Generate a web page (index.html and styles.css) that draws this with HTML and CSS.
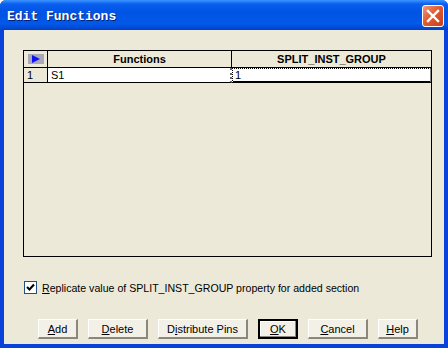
FILE: index.html
```html
<!DOCTYPE html>
<html lang="en">
<head>
    <meta charset="UTF-8">
    <title>Edit Functions</title>
    <link rel="stylesheet" href="styles.css">
</head>
<body>
    <div class="window">
        <div class="titlebar">
            <span class="title">Edit Functions</span>
            <div class="close">
                <svg width="14" height="14" viewBox="0 0 14 14">
                    <path d="M2 2 L12 12 M12 2 L2 12" stroke="#fff" stroke-width="2.4" stroke-linecap="square"/>
                </svg>
            </div>
        </div>

        <div class="client">
            <div class="grid">
                <div class="grid-row header">
                    <div class="cell sel"><span class="sel-icon"></span></div>
                    <div class="cell col-fn">Functions</div>
                    <div class="cell col-val">SPLIT_INST_GROUP</div>
                </div>
                <div class="grid-row">
                    <div class="cell sel num">1</div>
                    <div class="cell col-fn data">S1</div>
                    <div class="cell col-val data focus">1</div>
                </div>
            </div>

            <label class="check">
                <span class="box">
                    <svg width="9" height="9" viewBox="0 0 9 9">
                        <path d="M1 4 L3.5 6.5 L8 1.5" stroke="#000" stroke-width="2" fill="none"/>
                    </svg>
                </span>
                <span class="check-text"><u>R</u>eplicate value of SPLIT_INST_GROUP property for added section</span>
            </label>

            <div class="buttons">
                <div class="btn w-40"><u>A</u>dd</div>
                <div class="btn w-60"><u>D</u>elete</div>
                <div class="btn w-90">D<u>i</u>stribute Pins</div>
                <div class="btn w-40 default"><u>O</u>K</div>
                <div class="btn w-60"><u>C</u>ancel</div>
                <div class="btn w-40"><u>H</u>elp</div>
            </div>
        </div>
    </div>
</body>
</html>
```

FILE: styles.css
```css
* {
    margin: 0;
    padding: 0;
    box-sizing: border-box;
}

body {
    font-family: "Liberation Sans", Arial, sans-serif;
    font-size: 11px;
    color: #000;
    background: #fff;
}

.window {
    width: 448px;
    height: 348px;
    display: flex;
    flex-direction: column;
    background: #0842d9;
    border-radius: 6px 6px 0 0;
    overflow: hidden;
}

.titlebar {
    height: 30px;
    display: flex;
    align-items: center;
    justify-content: space-between;
    padding: 0 4px 0 7px;
    background: linear-gradient(#3d95ff 0px, #0a5fef 4px, #0054e3 12px, #0258e8 24px, #0041c8 30px);
}

.title {
    font-family: "Liberation Mono", "Courier New", monospace;
    font-weight: bold;
    font-size: 13px;
    color: #fff;
    padding-top: 2px;
    text-shadow: 1px 1px 0 #0a1e6e;
}

.close {
    width: 22px;
    height: 22px;
    margin-top: 2px;
    border: 1px solid #fff;
    border-radius: 3px;
    background: linear-gradient(135deg, #f09a7a, #e15a32 45%, #c6401c);
    display: flex;
    align-items: center;
    justify-content: center;
}

.client {
    flex: 1;
    margin: 0 4px 4px 4px;
    background: #ece9d8;
    padding: 20px 0 0 19px;
    display: flex;
    flex-direction: column;
}

.grid {
    width: 409px;
    height: 207px;
    border: 1px solid #000;
    background: #ece9d8;
}

.grid-row {
    display: flex;
    height: 15px;
}

.grid-row.header {
    height: 17px;
    border-bottom: 1px solid #000;
}

.cell {
    display: flex;
    align-items: center;
    white-space: nowrap;
}

.header .cell {
    justify-content: center;
    font-weight: bold;
    border-right: 1px solid #000;
}

.header .cell:last-child {
    border-right: none;
}

.sel {
    width: 24px;
}

.col-fn {
    width: 184px;
}

.col-val {
    width: 199px;
}

.sel-icon {
    width: 16px;
    height: 10px;
    background: #a8a8b8;
    position: relative;
}

.sel-icon::after {
    content: "";
    position: absolute;
    left: 4px;
    top: 1px;
    border-left: 8px solid #1010f0;
    border-top: 4px solid transparent;
    border-bottom: 4px solid transparent;
}

.num {
    padding-left: 3px;
    border-right: 1px solid #000;
    border-bottom: 1px solid #000;
}

.data {
    background: #fff;
    padding-left: 3px;
    border-bottom: 1px solid #000;
}

.col-fn.data {
    border-right: 2px dotted #666;
}

.focus {
    border-top: 1px dotted #000;
    border-left: 1px dotted #000;
    border-bottom: 2px solid #000;
    border-right: 1px solid #888;
    padding-left: 2px;
}

.check {
    display: flex;
    align-items: center;
    gap: 5px;
    margin-top: 24px;
    margin-left: 1px;
    height: 13px;
}

.check-text {
    font-size: 10.6px;
}

.box {
    width: 13px;
    height: 13px;
    border: 1px solid #1c5180;
    background: #fff;
    display: flex;
    align-items: center;
    justify-content: center;
}

.buttons {
    display: flex;
    gap: 10px;
    margin-top: 25px;
    margin-left: 15px;
}

.btn {
    height: 20px;
    display: flex;
    align-items: center;
    justify-content: center;
    background: #f3f1e7;
    border-top: 1px solid #fff;
    border-left: 1px solid #fff;
    border-right: 2px solid #8a887c;
    border-bottom: 2px solid #8a887c;
}

.btn.default {
    border: 2px solid #000;
    box-shadow: inset -1px -1px 0 #8a887c, inset 1px 1px 0 #fff;
}

.w-40 {
    width: 40px;
}

.w-60 {
    width: 60px;
}

.w-90 {
    width: 90px;
}
```
